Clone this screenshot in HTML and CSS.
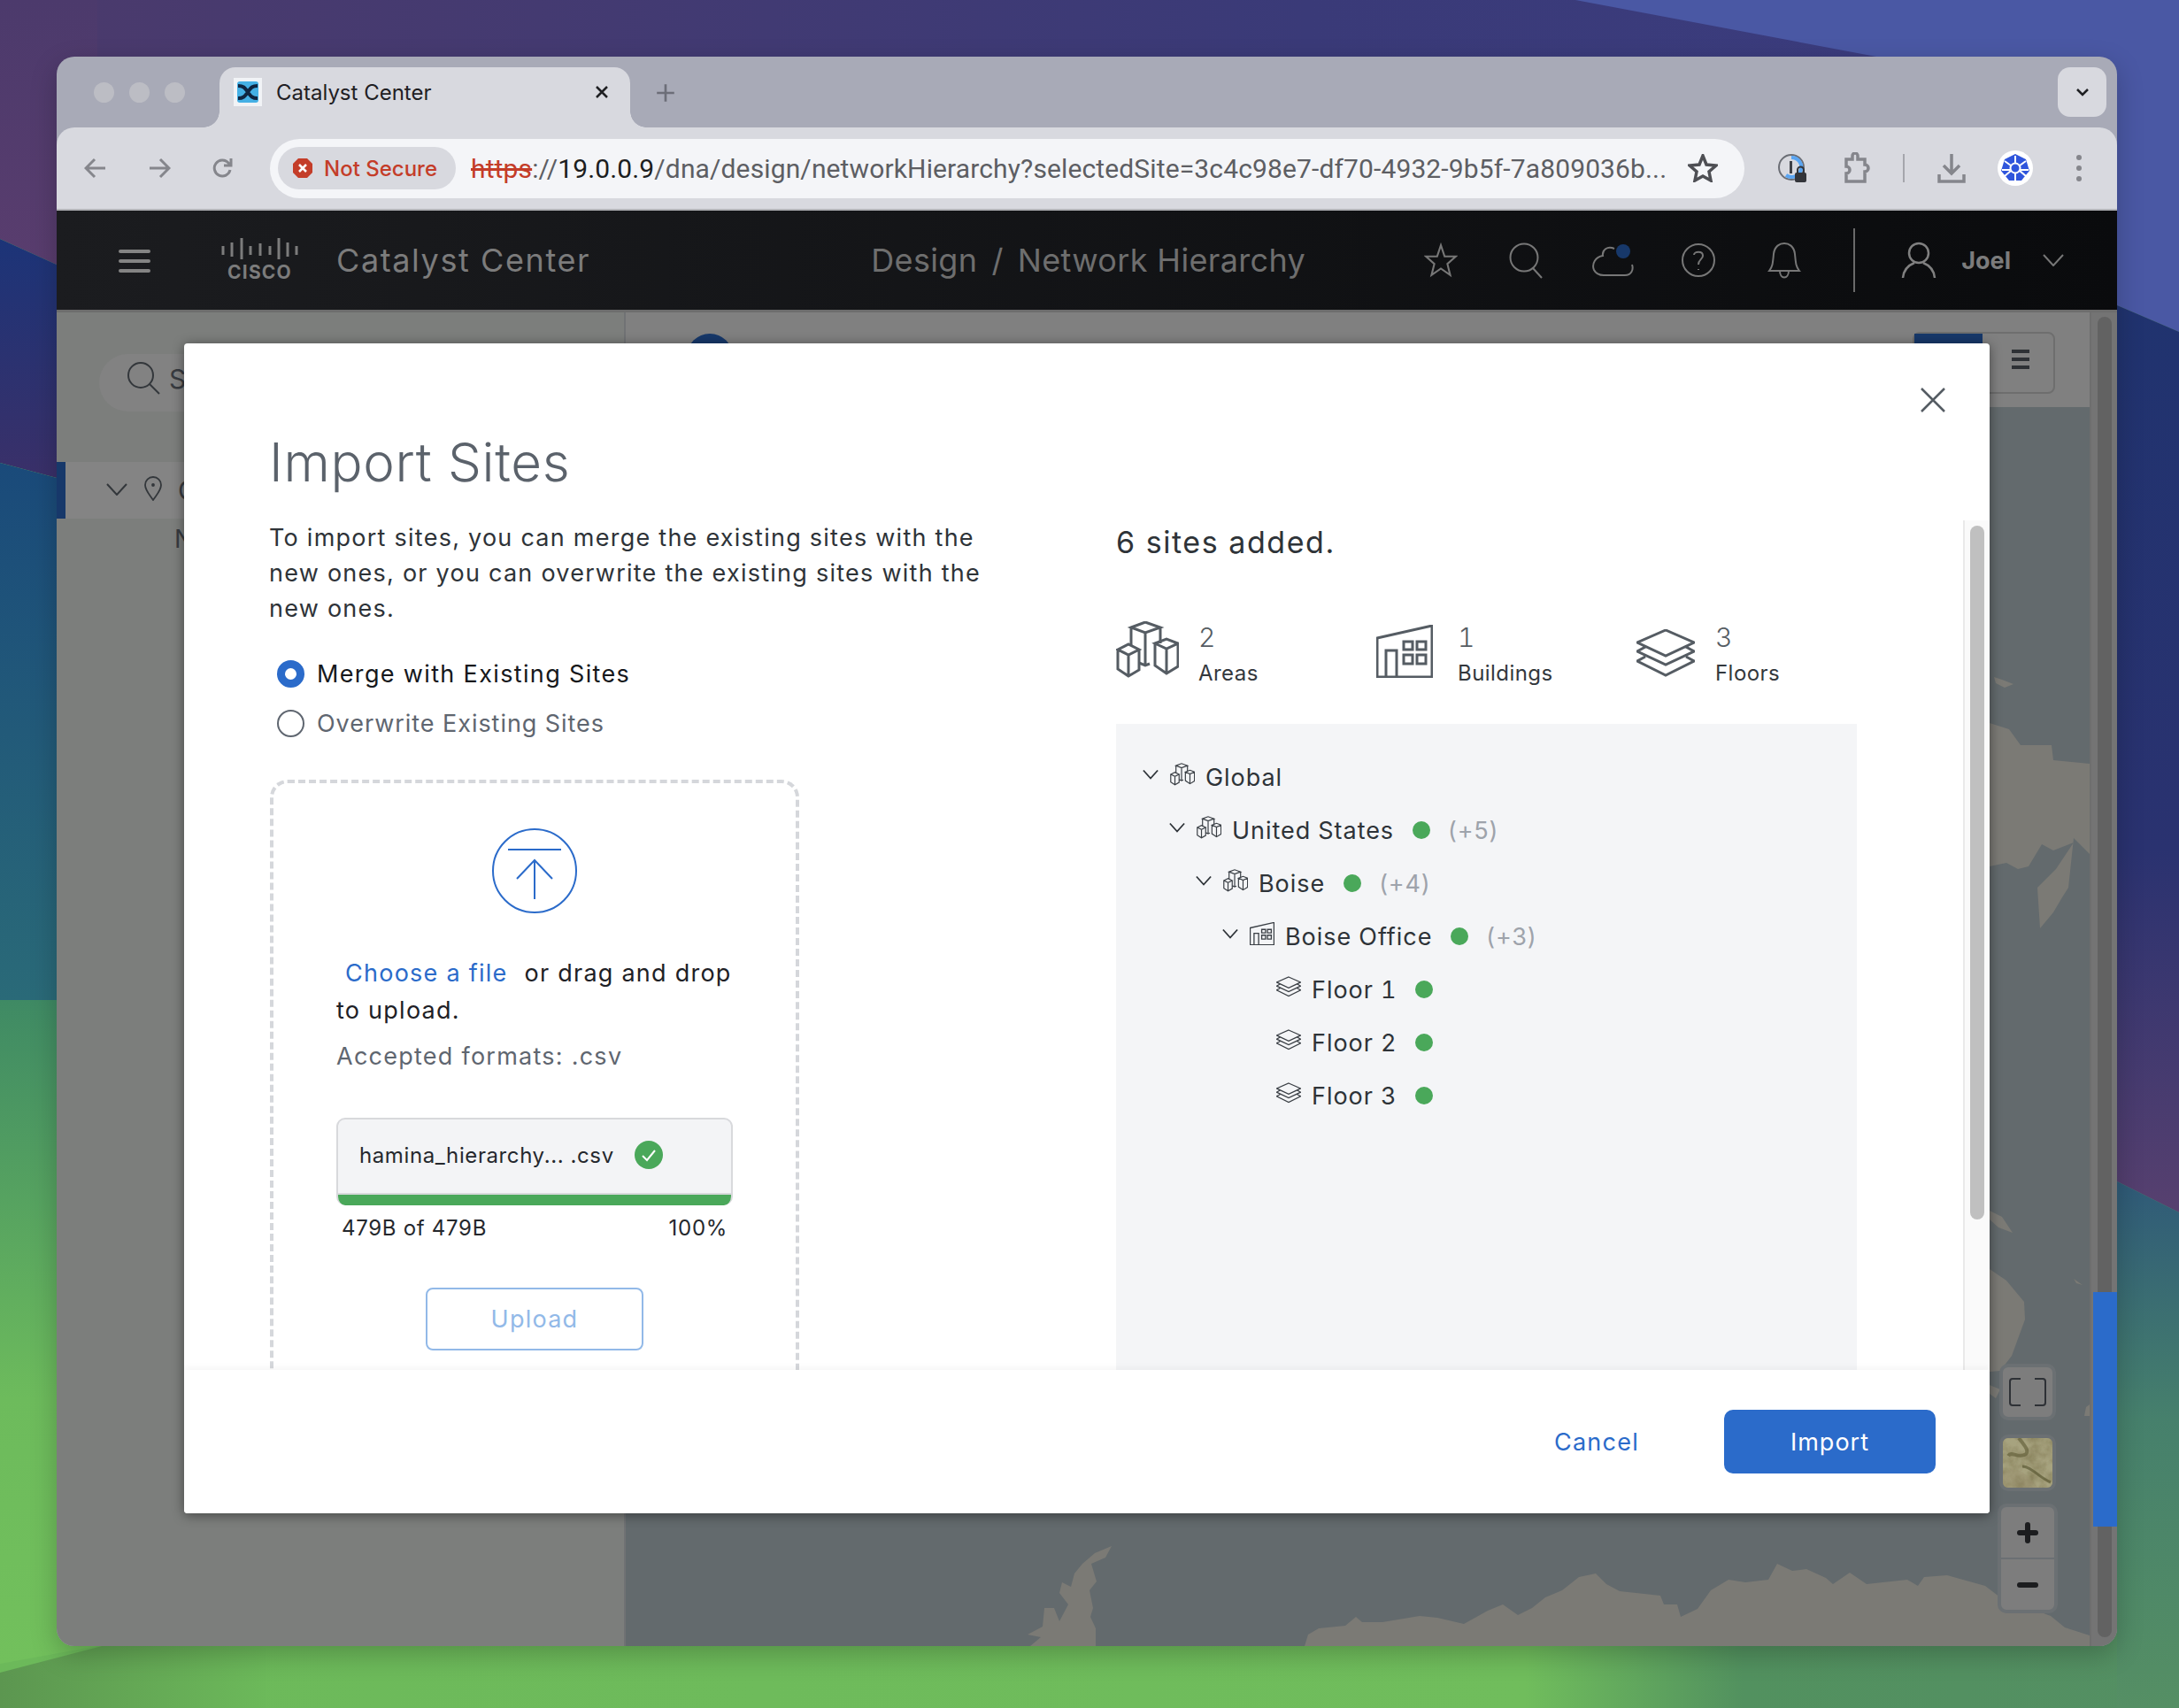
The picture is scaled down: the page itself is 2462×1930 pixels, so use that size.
FILE: index.html
```html
<!DOCTYPE html>
<html lang="en">
<head>
  <meta charset="UTF-8">
  <title>Catalyst Center - Import Sites</title>
  <link rel="stylesheet" href="styles.css">
</head>
<body>
  <!-- desktop wallpaper -->
  <svg class="wallpaper" viewBox="0 0 2462 1930" aria-hidden="true">
    <defs>
      <linearGradient id="wpTop" x1="0" y1="0" x2="1" y2="0">
        <stop offset="0" stop-color="#4b3a6c"/>
        <stop offset=".6" stop-color="#3a3a78"/>
        <stop offset="1" stop-color="#3b3d80"/>
      </linearGradient>
      <linearGradient id="wpLeftPurple" x1="0" y1="0" x2="0" y2="1">
        <stop offset="0" stop-color="#4c3a6c"/>
        <stop offset="1" stop-color="#5a3d6e"/>
      </linearGradient>
      <linearGradient id="wpLeftBlue" x1="0" y1="0" x2="0" y2="1">
        <stop offset="0" stop-color="#1c3478"/>
        <stop offset="1" stop-color="#3a3069"/>
      </linearGradient>
      <linearGradient id="wpLeftTeal" x1="0" y1="0" x2="0" y2="1">
        <stop offset="0" stop-color="#1a4a7a"/>
        <stop offset="1" stop-color="#2a6a78"/>
      </linearGradient>
      <linearGradient id="wpLeftGreen" x1="0" y1="0" x2="0" y2="1">
        <stop offset="0" stop-color="#3f8a64"/>
        <stop offset=".6" stop-color="#6dbb5c"/>
        <stop offset="1" stop-color="#72c05c"/>
      </linearGradient>
      <linearGradient id="wpRightNavy" x1="0" y1="0" x2="0" y2="1">
        <stop offset="0" stop-color="#20336f"/>
        <stop offset=".6" stop-color="#2a3270"/>
        <stop offset="1" stop-color="#57406f"/>
      </linearGradient>
      <linearGradient id="wpRightTeal" x1="0" y1="0" x2="0" y2="1">
        <stop offset="0" stop-color="#2f5a78"/>
        <stop offset=".45" stop-color="#46806c"/>
        <stop offset="1" stop-color="#558f64"/>
      </linearGradient>
      <linearGradient id="wpBottom" x1="0" y1="0" x2="1" y2="0">
        <stop offset="0" stop-color="#6cb95a"/>
        <stop offset=".7" stop-color="#70bd5c"/>
        <stop offset=".8" stop-color="#52915f"/>
        <stop offset="1" stop-color="#548f63"/>
      </linearGradient>
      <linearGradient id="wpCorner" x1="0" y1="0" x2="1" y2="0">
        <stop offset="0" stop-color="#5c9650"/>
        <stop offset="1" stop-color="#6cb95a"/>
      </linearGradient>
      <filter id="terrainNoise" x="0" y="0" width="100%" height="100%">
        <feTurbulence type="fractalNoise" baseFrequency=".07" numOctaves="4" seed="8"/>
        <feColorMatrix type="matrix" values="0 0 0 0 .42  0 0 0 0 .40  0 0 0 0 .24  1.600 0 0 0 -.1"/>
      </filter>
    </defs>
    <rect width="2462" height="1930" fill="url(#wpBottom)"/>
    <rect width="2462" height="64" fill="url(#wpTop)"/>
    <path d="M0 0H110V320L0 270Z" fill="url(#wpLeftPurple)"/>
    <path d="M0 270 64 299V540L0 523Z" fill="url(#wpLeftBlue)"/>
    <path d="M0 523 64 540V1130H0Z" fill="url(#wpLeftTeal)"/>
    <path d="M0 1130H110V1860L0 1880Z" fill="url(#wpLeftGreen)"/>
    <path d="M1780 0H2462V375L2392 345 2120 64Z" fill="#4a58a4"/>
    <path d="M2392 345 2462 375V1370L2392 1335Z" fill="url(#wpRightNavy)"/>
    <path d="M2392 1335 2462 1370V1930H2392Z" fill="url(#wpRightTeal)"/>
    <path d="M0 1930V1890L115 1860H300V1930Z" fill="url(#wpCorner)"/>
  </svg>

  <!-- icon sprites -->
  <svg class="sprites" aria-hidden="true">
    <symbol id="ico-areas" viewBox="0 0 71 64">
      <path d="M17 7 33 1 50 7 33 13Z M17 7V28 M33 13V50 M50 7V25 M26 47 33 50 38 48"/>
      <path d="M2 32 14 26 26 32 14 38Z M2 32V54L14 62 26 55V32 M14 38V62"/>
      <path d="M44 25 57 20 70 25 57 31Z M44 25V50L57 59 70 51V25 M57 31V59"/>
    </symbol>
    <symbol id="ico-building" viewBox="0 0 64 60">
      <path d="M1 15 63 1V59H1Z M11 59V29H23V59"/>
      <path d="M31 19H41V28H31Z M46 19H56V28H46Z M31 34H41V44H31Z M46 34H56V44H46Z"/>
    </symbol>
    <symbol id="ico-floors" viewBox="0 0 66 54">
      <path d="M33 1 65 15 33 30 1 15Z M10 20 1 25 33 40 65 25 56 20 M10 31 1 36 33 52 65 36 56 31"/>
    </symbol>
    <symbol id="ico-chevron" viewBox="0 0 20 12">
      <path d="M1 1 10 11 19 1"/>
    </symbol>
  </svg>

  <div class="window">
    <div class="tabstrip">
      <div class="lights"><span></span><span></span><span></span></div>
      <div class="tab">
        <svg class="favicon" viewBox="0 0 32 32">
          <rect width="32" height="32" fill="#f1f3f6"/>
          <rect x="4" y="4" width="24" height="24" rx="3" fill="#45b0e5"/>
          <path d="M5 9C12 9 13 12 16 16S20 23 27 23M5 23C12 23 13 20 16 16S20 9 27 9" fill="none" stroke="#10243f" stroke-width="4"/>
        </svg>
        <span class="tab-title">Catalyst Center</span>
        <svg class="tab-close" viewBox="0 0 16 16"><path d="M2 2 14 14M14 2 2 14"/></svg>
      </div>
      <svg class="new-tab" viewBox="0 0 18 18"><path d="M9 1V17M1 9H17"/></svg>
      <div class="tab-menu">
        <svg viewBox="0 0 16 10"><path d="M2 2 8 8 14 2"/></svg>
      </div>
    </div>

    <div class="toolbar">
      <div class="nav-btn"><svg viewBox="0 0 26 24"><path d="M24 12H3M12 2 2 12 12 22"/></svg></div>
      <div class="nav-btn"><svg viewBox="0 0 26 24"><path d="M2 12H23M14 2 24 12 14 22"/></svg></div>
      <div class="nav-btn"><svg viewBox="0 0 26 26"><path d="M21 15A9 9 0 1 1 19 7L22 10M22 2V10H14"/></svg></div>
      <div class="omnibox">
        <div class="security">
          <svg viewBox="0 0 24 24">
            <path class="sec-shape" d="M7 1H17L23 7V17L17 23H7L1 17V7Z"/>
            <path class="sec-x" d="M8 8 16 16M16 8 8 16"/>
          </svg>
          <span>Not Secure</span>
        </div>
        <div class="url"><span class="https">https</span><span class="url-dim">://</span>19.0.0.9<span class="url-dim">/dna/design/networkHierarchy?selectedSite=3c4c98e7-df70-4932-9b5f-7a809036b...</span></div>
        <svg class="url-star" viewBox="0 0 34 32"><path d="M17 2 21 12 32 13 24 20 26 30 17 25 8 30 10 20 2 13 13 12Z"/></svg>
      </div>
      <div class="ext ext-1p">
        <svg viewBox="0 0 34 34">
          <circle cx="16" cy="16" r="14" fill="#d8d9df" stroke="#6b6e75" stroke-width="2"/>
          <path d="M16 5A11 11 0 1 1 10 25" fill="none" stroke="#5aa5f2" stroke-width="4"/>
          <rect x="14" y="9" width="3" height="14" fill="#3e4046"/>
          <rect x="20" y="22" width="13" height="11" rx="2" fill="#33353a"/>
          <path d="M23 22V19A3.500 3.500 0 0 1 30 19V22" fill="none" stroke="#33353a" stroke-width="2"/>
        </svg>
      </div>
      <div class="ext">
        <svg class="ext-line" viewBox="0 0 34 36"><path d="M6 8H13V4A3 3 0 0 1 19 4V8H27V14A4 4 0 0 1 27 22V33H6V24A4 4 0 0 0 6 16Z"/></svg>
      </div>
      <span class="toolbar-sep"></span>
      <div class="ext">
        <svg class="ext-line" viewBox="0 0 34 36"><path d="M17 2V24M8 15 17 24 26 15M3 25V33H31V25"/></svg>
      </div>
      <div class="ext">
        <svg class="ext-k8s" viewBox="0 0 40 40">
          <circle cx="20" cy="20" r="20" fill="#fff"/>
          <path d="M20 4 32 10 36 23 27 34H13L4 23 8 10Z" fill="#2f55dc"/>
          <circle cx="20" cy="20" r="5.500" fill="none" stroke="#fff" stroke-width="2"/>
          <path d="M20 6V14M20 26V34M8 12 15 17M25 23 32 29M32 12 25 17M15 23 8 29M5 22H14M26 22H35" stroke="#fff" stroke-width="2"/>
        </svg>
      </div>
      <div class="ext kebab"><span></span><span></span><span></span></div>
    </div>

    <header class="appbar">
      <div class="burger"><span></span><span></span><span></span></div>
      <div class="cisco">
        <svg viewBox="0 0 87 24">
          <path d="M2 9V19M12 5V21M23 0V24M33 9V19M44 6V20M55 9V19M65 0V24M75 5V21M85 9V19"/>
        </svg>
        <span>CISCO</span>
      </div>
      <div class="product">Catalyst Center</div>
      <div class="crumbs">Design<i>/</i>Network Hierarchy</div>
      <div class="app-actions">
        <div class="app-btn"><svg viewBox="0 0 36 36"><path d="M18 2 22 14 34 14 25 22 28 34 18 27 8 34 11 22 2 14 14 14Z"/></svg></div>
        <div class="app-btn search"><svg viewBox="0 0 42 42"><circle cx="18" cy="18" r="15.500"/><path d="M28 30 38 41"/></svg></div>
        <div class="app-btn cloud">
          <svg viewBox="0 0 48 38">
            <path d="M14 36H38C45 36 48 30 46 24M26 6C18 2 12 8 13 14 5 15 0 23 3 30 5 34 9 36 14 36"/>
            <circle class="cloud-dot" cx="36" cy="9" r="8"/>
          </svg>
        </div>
        <div class="app-btn help">
          <svg viewBox="0 0 40 40"><circle cx="20" cy="20" r="18"/><path d="M15 14C15 10 25 9 25 15 25 19 20 19 20 25M20 30V31"/></svg>
        </div>
        <div class="app-btn"><svg viewBox="0 0 38 42"><path d="M2 33C6 28 6 24 7 14 8 5 14 2 19 2S30 5 31 14C32 24 32 28 36 33Z M14 33C14 43 24 43 24 33"/></svg></div>
      </div>
      <span class="app-sep"></span>
      <svg class="user-ico" viewBox="0 0 40 42"><circle cx="20" cy="13" r="11"/><path d="M2 41C3 30 10 26 15 24M38 41C37 30 30 26 25 24"/></svg>
      <span class="user-name">Joel</span>
      <svg class="user-chev" viewBox="0 0 24 14"><path d="M1 1 12 13 23 1"/></svg>
    </header>

    <div class="workspace">
      <aside class="sidebar">
        <div class="side-search">
          <svg viewBox="0 0 38 38"><circle cx="15" cy="15" r="14"/><path d="M25 25 36 36"/></svg>
          <span>S</span>
        </div>
        <div class="side-row">
          <svg class="side-chev" viewBox="0 0 24 14"><path d="M1 1 12 13 23 1"/></svg>
          <svg class="side-pin" viewBox="0 0 20 28"><path d="M10 27C6 21 1 16 1 10A9 9 0 0 1 19 10C19 16 14 21 10 27Z"/><circle cx="10" cy="10" r="1" fill="#33373b"/></svg>
          <span>G</span>
        </div>
        <div class="side-child">N</div>
      </aside>

      <main class="main">
        <div class="main-top">
          <span class="site-badge"></span>
          <div class="view-toggle">
            <span class="view-on"></span>
            <span class="view-off"><b></b><b></b><b></b></span>
          </div>
        </div>
        <div class="map">
          <svg viewBox="707 460 1654 1400" preserveAspectRatio="none">
            <g fill="#7b7a75">
              <path d="M1164 1860 1176 1850 1161 1847 1178 1838 1180 1817 1191 1817 1197 1832 1207 1813 1197 1800 1200 1788 1210 1793 1214 1778 1223 1767 1237 1755 1256 1747 1249 1760 1233 1767 1239 1787 1231 1797 1235 1817 1232 1827 1238 1840V1860Z"/>
              <path d="M1474 1860 1478 1847 1490 1840 1520 1837 1532 1827 1539 1833 1562 1833 1604 1826 1624 1828 1654 1835 1681 1820 1698 1813 1715 1825 1731 1817 1746 1805 1765 1797 1784 1782 1803 1778 1815 1790 1830 1798 1876 1803 1880 1813 1895 1813 1899 1827 1918 1818 1933 1797 1953 1785 1972 1788 1998 1785 2008 1767 2025 1775 2041 1773 2063 1783 2071 1790 2090 1777 2109 1790 2155 1785 2167 1792 2174 1782 2200 1780 2243 1792 2260 1805 2317 1826 2333 1839 2361 1848V1860Z"/>
              <path d="M2248 817 2270 824 2283 842 2318 842 2320 859 2361 863V965L2343 947 2340 975 2337 1003 2330 1014 2320 1031 2305 1049 2302 1003 2323 982 2343 952 2320 961 2307 954 2292 979 2280 982 2267 975 2248 979Z"/>
              <path d="M2253 765 2262 768 2275 773 2265 777 2255 772Z"/>
              <path d="M2248 1434 2267 1447 2287 1471 2288 1491 2273 1532 2260 1549 2248 1550Z"/>
              <path d="M2248 1565 2260 1570 2255 1580 2248 1575Z"/>
              <path d="M2248 1368 2262 1375 2274 1393 2258 1387 2248 1378Z"/>
              <path d="M2355 1600 2357 1590 2361 1587V1600Z"/>
              <path d="M2343 1445 2353 1452 2346 1450Z"/>
            </g>
          </svg>
          <div class="map-ctl expand">
            <svg viewBox="0 0 42 32"><path d="M13 1H4Q1 1 1 4V28Q1 31 4 31H13M29 1H38Q41 1 41 4V28Q41 31 38 31H29"/></svg>
          </div>
          <div class="map-ctl terrain">
            <svg viewBox="0 0 56 56" preserveAspectRatio="none">
              <rect width="56" height="56" fill="#857e58"/>
              <rect width="56" height="56" filter="url(#terrainNoise)" opacity=".85"/>
              <path d="M18 0C24 8 30 14 26 18 18 24 10 14 6 20" fill="none" stroke="#55522c" stroke-width="4" opacity=".55"/>
              <path d="M22 32C32 32 40 44 54 50" fill="none" stroke="#504e29" stroke-width="3" opacity=".6"/>
              <path d="M0 40C14 30 24 38 34 50L40 56H0Z" fill="#9a9270" opacity=".4"/>
            </svg>
          </div>
          <div class="map-ctl zoom-ctl">
            <span class="zoom-plus"></span>
            <span class="zoom-minus"></span>
          </div>
        </div>
      </main>

      <div class="page-scroll"><span></span></div>
      <span class="page-thumb"></span>
    </div>

    <!-- Import Sites dialog -->
    <section class="modal">
      <svg class="modal-close" viewBox="0 0 30 30"><path d="M2 2 28 28M28 2 2 28"/></svg>
      <div class="modal-body">
        <div class="col-left">
          <h1>Import Sites</h1>
          <p class="intro">To import sites, you can merge the existing sites with the new ones, or you can overwrite the existing sites with the new ones.</p>
          <div class="radio-row on"><span class="radio"></span>Merge with Existing Sites</div>
          <div class="radio-row"><span class="radio"></span>Overwrite Existing Sites</div>

          <div class="dropzone">
            <svg class="upload-ico" viewBox="0 0 96 96"><circle cx="48" cy="48" r="47"/><path d="M18 24H78M48 80V36M28 57 48 36 68 57"/></svg>
            <div class="drop-line"><a class="choose">Choose a file</a><span>or drag and drop</span></div>
            <div class="drop-line">to upload.</div>
            <div class="formats">Accepted formats: .csv</div>
            <div class="file-card">
              <div class="file-name">
                <span>hamina_hierarchy... .csv</span>
                <svg viewBox="0 0 32 32"><circle cx="16" cy="16" r="16" fill="#4aa85a"/><path d="M9 17 14 22 23 11" fill="none" stroke="#fff" stroke-width="2"/></svg>
              </div>
              <div class="file-bar"></div>
            </div>
            <div class="file-meta"><span>479B of 479B</span><span>100%</span></div>
            <button class="btn-upload" type="button">Upload</button>
          </div>
        </div>

        <div class="col-right">
          <h2>6 sites added.</h2>
          <div class="stats">
            <div class="stat">
              <svg class="stat-areas"><use href="#ico-areas"/></svg>
              <div><div class="stat-num">2</div><div class="stat-label">Areas</div></div>
            </div>
            <div class="stat">
              <svg class="stat-building"><use href="#ico-building"/></svg>
              <div><div class="stat-num">1</div><div class="stat-label">Buildings</div></div>
            </div>
            <div class="stat">
              <svg class="stat-floors"><use href="#ico-floors"/></svg>
              <div><div class="stat-num">3</div><div class="stat-label">Floors</div></div>
            </div>
          </div>

          <div class="tree">
            <div class="node"><svg class="chev"><use href="#ico-chevron"/></svg><svg class="node-ico"><use href="#ico-areas"/></svg><span class="node-name">Global</span></div>
            <div class="node lvl-1"><svg class="chev"><use href="#ico-chevron"/></svg><svg class="node-ico"><use href="#ico-areas"/></svg><span class="node-name">United States</span><span class="dot"></span><span class="count">(+5)</span></div>
            <div class="node lvl-2"><svg class="chev"><use href="#ico-chevron"/></svg><svg class="node-ico"><use href="#ico-areas"/></svg><span class="node-name">Boise</span><span class="dot"></span><span class="count">(+4)</span></div>
            <div class="node lvl-3"><svg class="chev"><use href="#ico-chevron"/></svg><svg class="node-ico"><use href="#ico-building"/></svg><span class="node-name">Boise Office</span><span class="dot"></span><span class="count">(+3)</span></div>
            <div class="node lvl-4"><span class="chev"></span><svg class="node-ico"><use href="#ico-floors"/></svg><span class="node-name">Floor 1</span><span class="dot"></span></div>
            <div class="node lvl-4"><span class="chev"></span><svg class="node-ico"><use href="#ico-floors"/></svg><span class="node-name">Floor 2</span><span class="dot"></span></div>
            <div class="node lvl-4"><span class="chev"></span><svg class="node-ico"><use href="#ico-floors"/></svg><span class="node-name">Floor 3</span><span class="dot"></span></div>
          </div>
        </div>

        <div class="modal-scroll"><span></span></div>
      </div>
      <footer class="modal-foot">
        <a class="btn-cancel">Cancel</a>
        <button class="btn-import" type="button">Import</button>
      </footer>
    </section>
  </div>
</body>
</html>
```

FILE: styles.css
```css
* {
  box-sizing: border-box;
}

html, body {
  margin: 0;
  height: 1930px;
  overflow: hidden;
}

body {
  position: relative;
  padding: 64px 70px 70px 64px;
  font-family: Inter, "Noto Sans", sans-serif;
  background: #4b3a6c;
}

.wallpaper {
  position: absolute;
  left: 0;
  top: 0;
  width: 2462px;
  height: 1930px;
}

.sprites {
  position: absolute;
  width: 0;
  height: 0;
}

svg {
  display: block;
  flex: none;
}

/* browser window */
.window {
  position: relative;
  width: 2328px;
  height: 1796px;
  border-radius: 20px;
  overflow: hidden;
  background: #a8aab7;
  box-shadow: 0 10px 30px rgba(0, 0, 0, .22);
}

.tabstrip {
  display: flex;
  align-items: flex-end;
  height: 80px;
  padding-left: 42px;
}

.lights {
  display: flex;
  gap: 17px;
  align-self: flex-start;
  margin-top: 29px;
}

.lights span {
  width: 23px;
  height: 23px;
  border-radius: 50%;
  background: #bcbdc4;
}

.tab {
  position: relative;
  display: flex;
  align-items: center;
  width: 464px;
  height: 68px;
  margin-left: 39px;
  padding: 0 0 12px 16px;
  border-radius: 18px 18px 0 0;
  background: #d8d9df;
}

.tab::before,
.tab::after {
  content: "";
  position: absolute;
  bottom: 0;
  width: 18px;
  height: 18px;
}

.tab::before {
  left: -18px;
  background: radial-gradient(circle at 0 0, transparent 17.5px, #d8d9df 18px);
}

.tab::after {
  right: -18px;
  background: radial-gradient(circle at 100% 0, transparent 17.5px, #d8d9df 18px);
}

.favicon {
  width: 32px;
  height: 32px;
}

.tab-title {
  margin-left: 16px;
  font-size: 24px;
  color: #1f2023;
}

.tab-close {
  width: 16px;
  height: 16px;
  margin-left: auto;
  margin-right: 24px;
  fill: none;
  stroke: #1f2023;
  stroke-width: 2.5;
}

.new-tab {
  width: 22px;
  height: 22px;
  margin: 0 0 28px 29px;
  fill: none;
  stroke: #6c6e78;
  stroke-width: 2.2;
}

.tab-menu {
  display: flex;
  align-items: center;
  justify-content: center;
  width: 55px;
  height: 56px;
  margin-left: auto;
  margin-right: 12px;
  align-self: flex-start;
  margin-top: 12px;
  border-radius: 14px;
  background: #d8d9df;
}

.tab-menu svg {
  width: 16px;
  height: 10px;
  fill: none;
  stroke: #1f2023;
  stroke-width: 2.5;
}

.toolbar {
  display: flex;
  align-items: center;
  height: 94px;
  padding: 0 0 0 8px;
  border-radius: 20px 20px 0 0;
  border-bottom: 2px solid #b3b4b8;
  background: #d8d9df;
}

.nav-btn {
  display: flex;
  align-items: center;
  justify-content: center;
  width: 72px;
}

.nav-btn svg {
  width: 26px;
  height: 26px;
  fill: none;
  stroke: #85868c;
  stroke-width: 3;
}

.omnibox {
  display: flex;
  align-items: center;
  width: 1666px;
  height: 67px;
  margin-left: 17px;
  padding: 0 30px 0 9px;
  border-radius: 34px;
  background: #f4f5f8;
}

.security {
  display: flex;
  align-items: center;
  gap: 12px;
  flex: none;
  width: 201px;
  height: 48px;
  padding-left: 16px;
  border-radius: 24px;
  background: #d8d9df;
  font-size: 24px;
  font-weight: 500;
  color: #c43d29;
}

.security svg {
  width: 24px;
  height: 24px;
}

.sec-shape {
  fill: #c43d29;
}

.sec-x {
  fill: none;
  stroke: #fff;
  stroke-width: 2.5;
}

.url {
  flex: 1;
  margin-left: 17px;
  font-family: Roboto, sans-serif;
  font-size: 30px;
  letter-spacing: .13px;
  color: #1c1d20;
  white-space: nowrap;
  overflow: hidden;
}

.https {
  color: #c43d29;
  text-decoration: line-through;
}

.url-dim {
  color: #5d5e63;
}

.url-star {
  width: 34px;
  height: 32px;
  fill: none;
  stroke: #4e4f54;
  stroke-width: 3.5;
}

.ext {
  display: flex;
  align-items: center;
  justify-content: center;
  width: 72px;
}

.ext svg {
  width: 34px;
  height: 36px;
}

.ext-1p {
  margin-left: 18px;
}

.ext .ext-line {
  fill: none;
  stroke: #85868c;
  stroke-width: 3.5;
}

.toolbar-sep {
  width: 2px;
  height: 32px;
  margin: 0 17px;
  background: #a5a6ac;
}

.ext .ext-k8s {
  width: 40px;
  height: 40px;
}

.kebab {
  flex-direction: column;
  gap: 6px;
}

.kebab span {
  width: 6px;
  height: 6px;
  border-radius: 50%;
  background: #85868c;
}

/* catalyst center header */
.appbar {
  display: flex;
  align-items: center;
  height: 112px;
  padding: 0 60px 0 70px;
  color: #7c7c7c;
  background: linear-gradient(90deg, #1b1c1f, #0a0b0d);
}

.burger {
  display: flex;
  flex-direction: column;
  gap: 7px;
  width: 36px;
  margin-top: 2px;
}

.burger span {
  height: 4px;
  border-radius: 2px;
  background: #848484;
}

.cisco {
  width: 87px;
  margin-left: 80px;
  text-align: center;
}

.cisco svg {
  width: 87px;
  height: 24px;
  fill: none;
  stroke: #7c7c7c;
  stroke-width: 3;
}

.cisco span {
  display: block;
  margin-top: 4px;
  font-size: 21px;
  line-height: 22px;
  font-weight: 700;
  letter-spacing: 1.2px;
}

.product {
  margin-left: 43px;
  font-size: 36px;
  letter-spacing: 1.6px;
}

.crumbs {
  margin-left: 317px;
  font-size: 36px;
  letter-spacing: .35px;
  color: #6e6e6e;
}

.crumbs i {
  margin: 0 16px;
  font-style: normal;
}

.app-actions {
  display: flex;
  margin-left: auto;
}

.app-btn {
  display: flex;
  align-items: center;
  justify-content: center;
  width: 97px;
}

.app-btn svg {
  width: 38px;
  height: 42px;
  fill: none;
  stroke: #777;
  stroke-width: 2;
}

.search svg {
  width: 42px;
}

.cloud svg {
  width: 48px;
  height: 38px;
}

.help svg {
  width: 40px;
  height: 40px;
}

.cloud-dot {
  fill: #17386a;
  stroke: none;
}

.app-sep {
  width: 2px;
  height: 72px;
  margin: 0 30px;
  background: #6a6a6a;
}

.user-ico {
  width: 40px;
  height: 42px;
  margin-left: 22px;
  fill: none;
  stroke: #808080;
  stroke-width: 2.500;
}

.user-name {
  margin-left: 28px;
  font-size: 27px;
  font-weight: 700;
  color: #7c7c7c;
}

.user-chev {
  width: 24px;
  height: 14px;
  margin-left: 36px;
  fill: none;
  stroke: #777;
  stroke-width: 2;
}

/* dimmed page behind the dialog */
.workspace {
  position: relative;
  display: flex;
  height: 1510px;
  background: #7c7e7c;
  border-top: 3px solid #6d6d6d;
}

.sidebar {
  width: 643px;
  padding-top: 47px;
  border-right: 2px solid #707274;
  color: #383b40;
  font-size: 28px;
}

.side-search {
  display: flex;
  align-items: center;
  width: 400px;
  height: 65px;
  margin-left: 48px;
  padding: 0 0 9px 32px;
  border-radius: 33px;
  background: #828282;
  font-size: 30px;
}

.side-search svg {
  width: 38px;
  height: 38px;
  margin-right: 9px;
  fill: none;
  stroke: #33373b;
  stroke-width: 2;
}

.side-row {
  display: flex;
  align-items: center;
  height: 64px;
  margin-top: 57px;
  padding-left: 46px;
  border-left: 10px solid #17386a;
  background: #848484;
  font-size: 30px;
}

.side-chev {
  width: 24px;
  height: 14px;
  margin-top: -2px;
  fill: none;
  stroke: #33373b;
  stroke-width: 2;
}

.side-pin {
  width: 20px;
  height: 28px;
  margin: -4px 18px 0 19px;
  fill: none;
  stroke: #33373b;
  stroke-width: 1.800;
}

.side-child {
  padding: 6px 0 0 133px;
}

.main {
  flex: 1;
  display: flex;
  flex-direction: column;
}

.main-top {
  position: relative;
  height: 107px;
  background: #808080;
}

.site-badge {
  position: absolute;
  left: 69px;
  top: 24px;
  width: 52px;
  height: 52px;
  border-radius: 50%;
  background: #17386a;
}

.view-toggle {
  position: absolute;
  right: 39px;
  top: 22px;
  display: flex;
  width: 161px;
  height: 70px;
  border: 2px solid #6e6e6e;
  border-radius: 8px;
}

.view-on {
  width: 77px;
  background: #17386a;
}

.view-off {
  flex: 1;
  display: flex;
  flex-direction: column;
  align-items: center;
  gap: 5px;
  padding: 18px 0 0 5px;
}

.view-off b {
  width: 20px;
  height: 4px;
  background: #2e3135;
}

.map {
  position: relative;
  flex: 1;
  background: #636a6d;
}

.map > svg {
  width: 100%;
  height: 100%;
}

.map-ctl {
  position: absolute;
  width: 64px;
  height: 64px;
  border: 4px solid #6b7073;
  border-radius: 10px;
  background: #7d7d7d;
  overflow: hidden;
  display: flex;
  align-items: center;
  justify-content: center;
}

.expand {
  right: 38px;
  top: 1081px;
}

.expand svg {
  width: 42px;
  height: 32px;
  fill: none;
  stroke: #2e3136;
  stroke-width: 2;
}

.terrain {
  right: 38px;
  top: 1161px;
}

.terrain svg {
  width: 100%;
  height: 100%;
}

.zoom-ctl {
  right: 36px;
  top: 1239px;
  width: 68px;
  height: 124px;
  flex-direction: column;
}

.zoom-plus,
.zoom-minus {
  position: relative;
  flex: 1;
  width: 100%;
}

.zoom-minus {
  border-top: 2px solid #6b7073;
}

.zoom-plus::before,
.zoom-plus::after,
.zoom-minus::before {
  content: "";
  position: absolute;
  left: 50%;
  top: 50%;
  width: 24px;
  height: 6px;
  margin: -3px 0 0 -12px;
  border-radius: 3px;
  background: #1c1d1f;
}

.zoom-plus::after {
  width: 6px;
  height: 24px;
  margin: -12px 0 0 -3px;
}

.page-scroll {
  width: 31px;
  padding: 5px 6px 10px 7px;
  background: #747474;
  border-left: 2px solid #6e6e6e;
}

.page-scroll span {
  display: block;
  height: 100%;
  border-radius: 8px;
  background: #626262;
}

.page-thumb {
  position: absolute;
  right: 0;
  top: 1107px;
  width: 27px;
  height: 265px;
  background: #2b6bca;
}

/* dialog */
.modal {
  position: absolute;
  left: 144px;
  top: 324px;
  width: 2040px;
  height: 1322px;
  border-radius: 4px;
  background: #fff;
  box-shadow: 0 2px 14px rgba(0, 0, 0, .45);
  overflow: hidden;
}

.modal-close {
  position: absolute;
  right: 49px;
  top: 49px;
  width: 30px;
  height: 30px;
  fill: none;
  stroke: #555c63;
  stroke-width: 2.500;
  z-index: 2;
}

.modal-body {
  position: relative;
  display: flex;
  height: 1160px;
  overflow: hidden;
}

.col-left {
  width: 1053px;
  padding: 98px 0 0 96px;
}

.col-left h1 {
  margin: 0;
  font-size: 60px;
  line-height: 72px;
  font-weight: 300;
  letter-spacing: .7px;
  color: #5b626b;
}

.intro {
  width: 820px;
  margin: 30px 0 25px;
  font-size: 27px;
  line-height: 40px;
  letter-spacing: 1.25px;
  color: #2e3338;
}

.radio-row {
  display: flex;
  align-items: center;
  height: 56px;
  padding-left: 9px;
  font-size: 27px;
  letter-spacing: .95px;
  color: #5f6670;
}

.radio-row.on {
  letter-spacing: 1.35px;
  color: #16181c;
}

.radio {
  width: 31px;
  height: 31px;
  margin-right: 14px;
  border: 2px solid #5f6670;
  border-radius: 50%;
  background: #fff;
}

.on .radio {
  border: 9px solid #2b6bca;
}

.dropzone {
  width: 598px;
  height: 760px;
  margin-top: 36px;
  margin-left: 1px;
  padding: 51px 71px 0;
  border: 4px dashed #d5d7db;
  border-radius: 20px;
}

.upload-ico {
  width: 96px;
  height: 96px;
  margin: 0 auto 47px;
  fill: none;
  stroke: #2b6bca;
  stroke-width: 2;
}

.drop-line {
  display: flex;
  font-size: 27px;
  line-height: 42px;
  letter-spacing: 1.25px;
  color: #1e2126;
}

.choose {
  margin: 0 19px 0 10px;
  color: #2b6bca;
}

.formats {
  margin: 11px 0 49px;
  font-size: 27px;
  line-height: 40px;
  letter-spacing: 1.25px;
  color: #5f6670;
}

.file-card {
  height: 99px;
  border-radius: 10px;
  overflow: hidden;
  border: 2px solid #d8d9dc;
  border-bottom: 0;
  background: #f3f4f6;
}

.file-name {
  display: flex;
  align-items: center;
  height: 83px;
  padding: 0 0 2px 24px;
  font-size: 24px;
  letter-spacing: .6px;
  color: #25282d;
}

.file-name svg {
  width: 32px;
  height: 32px;
  margin: -2px 0 0 23px;
}

.file-bar {
  height: 14px;
  margin: 0 -2px;
  border-top: 2px solid #d8d9dc;
  background: #4aa85a;
}

.file-meta {
  display: flex;
  justify-content: space-between;
  margin: 11px 0 52px;
  padding: 0 6px;
  font-size: 24px;
  line-height: 30px;
  letter-spacing: .7px;
  color: #25282d;
}

.btn-upload {
  display: block;
  width: 246px;
  height: 71px;
  margin: 0 auto;
  border: 2px solid #92b9e8;
  border-radius: 8px;
  background: #fff;
  font: inherit;
  font-size: 27px;
  letter-spacing: 1.25px;
  color: #92b9e8;
}

.col-right {
  width: 837px;
  padding-top: 203px;
}

.col-right h2 {
  margin: 0;
  font-size: 34px;
  line-height: 44px;
  font-weight: 400;
  letter-spacing: 1.55px;
  color: #2e3338;
}

.stats {
  display: grid;
  grid-template-columns: repeat(3, 294px);
  margin: 65px 0 37px;
}

.stat {
  display: flex;
  gap: 22px;
  color: #555c63;
}

.stat svg {
  fill: none;
  stroke: #555c63;
  stroke-width: 3;
}

.stat-areas {
  width: 71px;
  height: 64px;
  margin-top: 2px;
}

.stat-building {
  width: 64px;
  height: 60px;
  margin: 6px 6px 0 0;
}

.stat-floors {
  width: 66px;
  height: 54px;
  margin-top: 11px;
  margin-right: 1px;
}

.stat-num {
  font-size: 30px;
  line-height: 40px;
  font-weight: 300;
  font-feature-settings: "tnum";
}

.stat-label {
  padding-top: 1px;
  font-size: 24px;
  line-height: 40px;
  letter-spacing: .45px;
  color: #33383d;
}

.tree {
  height: 800px;
  padding: 30px 0 0 30px;
  background: #f4f5f7;
}

.node {
  display: flex;
  align-items: center;
  height: 60px;
  font-size: 27px;
  letter-spacing: .95px;
  font-feature-settings: "tnum";
  color: #2e3338;
}

.lvl-1 { padding-left: 30px; }
.lvl-2 { padding-left: 60px; }
.lvl-3 { padding-left: 90px; }
.lvl-4 { padding-left: 120px; }

.chev {
  flex: none;
  width: 18px;
  height: 12px;
  margin: -6px 13px 0 0;
  fill: none;
  stroke: #2e3338;
  stroke-width: 2;
}

.node-ico {
  flex: none;
  width: 28px;
  height: 26px;
  margin: -6px 12px 0 0;
  fill: none;
  stroke: #3a3f45;
  stroke-width: 3;
}

.dot {
  flex: none;
  width: 20px;
  height: 20px;
  margin-left: 21px;
  border-radius: 50%;
  background: #4aa85a;
}

.count {
  margin-left: 20px;
  font-feature-settings: normal;
  letter-spacing: .8px;
  color: #9ea3ab;
}

.modal-scroll {
  position: absolute;
  right: 0;
  top: 200px;
  bottom: 0;
  width: 30px;
  padding: 6px 6px 0 6px;
  border-left: 2px solid #e9e9e9;
  background: #fafafa;
}

.modal-scroll span {
  display: block;
  height: 784px;
  border-radius: 8px;
  background: #c0c0c0;
}

.modal-foot {
  display: flex;
  align-items: center;
  justify-content: flex-end;
  height: 162px;
  padding: 0 61px 0 0;
  background: #fff;
  box-shadow: 0 -4px 6px rgba(0, 0, 0, .03);
  position: relative;
}

.btn-cancel {
  margin-right: 96px;
  font-size: 27px;
  letter-spacing: 1.25px;
  color: #2b6bca;
}

.btn-import {
  width: 239px;
  height: 72px;
  border: 0;
  border-radius: 10px;
  background: #2b6bca;
  font: inherit;
  font-size: 27px;
  letter-spacing: 1px;
  color: #fff;
}
```
